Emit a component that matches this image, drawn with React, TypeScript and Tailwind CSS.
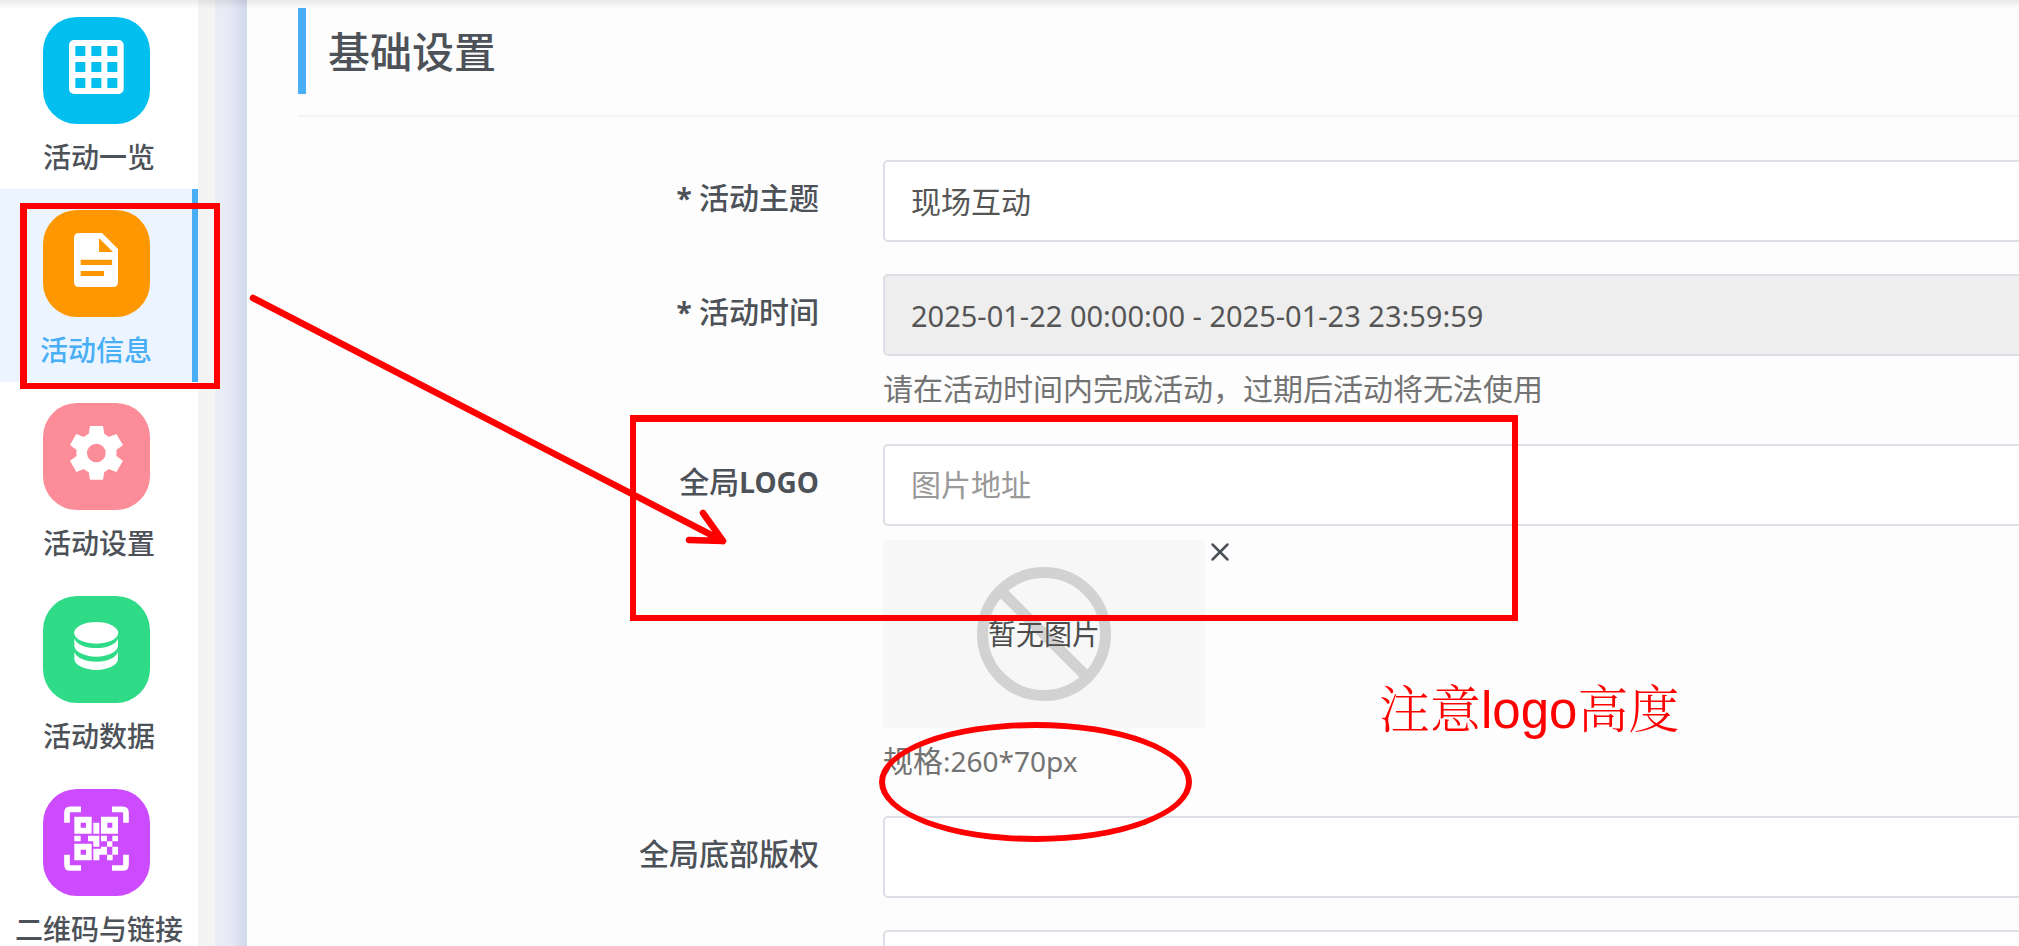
import type { ReactNode } from 'react';
import { clsx } from 'clsx';
import { X } from 'lucide-react';

const GridIcon = () => (
  <svg viewBox="129 51 321 321" className="size-full" aria-hidden="true">
    <rect x="207" y="120" width="164" height="162" rx="15" fill="#fff" />
    {[138, 186, 234].map((y) =>
      [226, 274, 322].map((x) => (
        <rect key={`${x}-${y}`} x={x} y={y} width="30" height="30" fill="#02bff0" />
      )),
    )}
  </svg>
);

const DocIcon = () => (
  <svg viewBox="129 630 321 321" className="size-full" aria-hidden="true">
    <path
      d="M238 699H306L354 747V845Q354 861 338 861H238Q222 861 222 845V715Q222 699 238 699Z"
      fill="#fff"
    />
    <path d="M297 714L339 756H297ZM242 779H336V795H242ZM242 813H312V828H242Z" fill="#ff9702" />
  </svg>
);

const GearIcon = () => (
  <svg viewBox="129 69 321 321" className="size-full" aria-hidden="true">
    <path
      fill="#fff"
      fillRule="evenodd"
      d="M270 138H309L313 162Q320 165 326 171L349 162L369 195L349 210Q351 219 349 228L369 242L349 276L326 267Q320 273 313 276L309 299H270L266 276Q258 273 252 267L229 276L210 242L230 228Q228 219 230 210L210 195L229 162L252 171Q258 165 266 162ZM289 191A28 28 0 1 0 289 247A28 28 0 1 0 289 191Z"
    />
  </svg>
);

const DatabaseIcon = () => (
  <svg viewBox="129 648 321 321" className="size-full" aria-hidden="true">
    <g fill="#fff">
      <ellipse cx="288.500" cy="758.500" rx="66" ry="32.500" />
      <path d="M223 776C230 793 256 804 289 804S347 793 354 776V798C352 816 324 830 289 830S225 816 223 798Z" />
      <path d="M223 816C230 834 256 845 289 845S347 834 354 816V838C352 856 324 870 289 870S225 856 223 838Z" />
    </g>
  </svg>
);

const QrIcon = () => (
  <svg viewBox="129 148 321 321" className="size-full" aria-hidden="true">
    <path
      fill="none"
      stroke="#fff"
      strokeWidth="17"
      d="M201 249V219Q201 209 211 209H243M336 209H368Q378 209 378 219V249M378 345V375Q378 385 368 385H336M243 385H211Q201 385 201 375V345"
    />
    <path
      fill="#fff"
      fillRule="evenodd"
      d="M223 231H275V282H223ZM242 249V264H258V249ZM303 231H354V282H303ZM322 249V264H337V249ZM223 312H275V362H223ZM242 330V345H258V330Z"
    />
    <path
      fill="#fff"
      d="M280 249H298V282H280ZM223 288H242V305H223ZM264 288H298V321H280V305H264ZM303 288H321V305H303ZM337 288H354V305H337ZM321 305H337V321H321ZM303 321H321V345H298V362H280V327H303ZM337 321H354V345H337ZM321 345H338V362H321Z"
    />
  </svg>
);

type NavItem = { label: string; color: string; icon: ReactNode; active?: boolean };

const navItems: NavItem[] = [
  { label: '活动一览', color: 'bg-[#02bff0]', icon: <GridIcon /> },
  { label: '活动信息', color: 'bg-[#ff9702]', icon: <DocIcon />, active: true },
  { label: '活动设置', color: 'bg-[#fd8c99]', icon: <GearIcon /> },
  { label: '活动数据', color: 'bg-[#30db88]', icon: <DatabaseIcon /> },
  { label: '二维码与链接', color: 'bg-[#cd4bff]', icon: <QrIcon /> },
];

const inputClass =
  'block h-[82px] w-full rounded-[5px] border-2 border-[#dce0e6] bg-white px-[26px] pb-[2px] text-[30px] text-[#555] placeholder:text-[#999] outline-none';

function Field({ id, label, children }: { id: string; label?: ReactNode; children: ReactNode }) {
  return (
    <div className="grid grid-cols-[585px_minmax(0,1fr)]">
      <div className="pt-4 pr-16 text-right text-[30px] leading-[44px] font-medium text-[#4d5259]">
        {label && <label htmlFor={id}>{label}</label>}
      </div>
      <div>{children}</div>
    </div>
  );
}

function Strong({ children }: { children: ReactNode }) {
  return <span className="text-[28px] font-bold">{children}</span>;
}

function Help({ children }: { children: ReactNode }) {
  return <p className="mt-[10px] text-[30px] leading-[46px] text-[#737373]">{children}</p>;
}

export default function App() {
  return (
    <div className="relative flex h-screen overflow-hidden bg-[#fdfdfd] font-['Noto_Sans','Noto_Sans_CJK_SC',sans-serif]">
      <nav className="-mt-1 w-[198px] shrink-0 bg-white">
        {navItems.map((item) => (
          <a
            key={item.label}
            href="#"
            className={clsx(
              'block h-[193px] pt-[21px] text-center text-[28px] leading-[32px] font-medium whitespace-nowrap',
              item.active
                ? 'border-r-[6px] border-[#48aff7] bg-[#ecf5ff] text-[#48aff7]'
                : 'text-[#4d5259]',
            )}
          >
            <span className={clsx('ml-[43px] block size-[107px] rounded-[34px]', item.color)}>
              {item.icon}
            </span>
            <span className="mt-[17px] block">{item.label}</span>
          </a>
        ))}
      </nav>
      <div className="w-[17px] shrink-0 bg-[#f4f4f4]" />
      <div className="w-8 shrink-0 bg-linear-to-r from-[#e9edf5] via-[#e8ebf6] via-40% to-[#d0d8ec]" />

      <main className="min-w-0 flex-1 pt-2 pl-[51px]">
        <h2 className="flex h-[86px] items-center border-l-8 border-[#48aff7] pt-[2px] pl-[22px] text-[42px] leading-[60px] font-medium text-[#4d5259]">
          基础设置
        </h2>
        <hr className="mt-[21px] border-t-2 border-[#f3f3f3]" />
        <form className="-mr-4 mt-[43px] flex flex-col gap-8">
          <Field
            id="topic"
            label={
              <>
                <Strong>* </Strong>活动主题
              </>
            }
          >
            <input id="topic" type="text" defaultValue="现场互动" className={inputClass} />
          </Field>
          <Field
            id="period"
            label={
              <>
                <Strong>* </Strong>活动时间
              </>
            }
          >
            <input
              id="period"
              type="text"
              readOnly
              defaultValue="2025-01-22 00:00:00 - 2025-01-23 23:59:59"
              className="block h-[82px] w-full rounded-[5px] border-2 border-[#dce0e6] bg-[#eee] px-[26px] text-[29px] text-[#555] outline-none"
            />
            <Help>请在活动时间内完成活动，过期后活动将无法使用</Help>
          </Field>
          <Field
            id="logo"
            label={
              <>
                全局<Strong>LOGO</Strong>
              </>
            }
          >
            <input id="logo" type="text" placeholder="图片地址" className={inputClass} />
            <div className="mt-[14px] flex items-start">
              <div className="grid h-[188px] w-[322px] place-items-center bg-[#f7f7f7]">
                <svg
                  viewBox="0 0 134 134"
                  className="col-start-1 row-start-1 size-[134px]"
                  fill="none"
                  stroke="#d2d2d2"
                  aria-hidden="true"
                >
                  <circle cx="67" cy="67" r="61.500" strokeWidth="11" />
                  <path d="M24 24L110 110" strokeWidth="11" />
                </svg>
                <span className="col-start-1 row-start-1 text-[28px] leading-[40px] text-[#4c4c4c]">
                  暂无图片
                </span>
              </div>
              <button type="button" aria-label="删除图片" className="h-6 text-[#4d5259]">
                <X size={30} strokeWidth={2} className="-mt-[3px]" />
              </button>
            </div>
            <Help>
              规格<span className="text-[28px]">:260*70px</span>
            </Help>
          </Field>
          <Field id="copyright" label="全局底部版权">
            <input id="copyright" type="text" className={inputClass} />
          </Field>
          <Field id="extra">
            <input id="extra" type="text" aria-label="附加信息" className={inputClass} />
          </Field>
        </form>
      </main>

      <div className="pointer-events-none absolute inset-x-0 top-0 h-[9px] bg-linear-to-b from-black/8 to-transparent" />

      <div className="pointer-events-none absolute top-[203px] left-5 h-[186px] w-[200px] border-6 border-l-7 border-[#f00]" />
      <div className="pointer-events-none absolute top-[415px] left-[630px] h-[206px] w-[888px] border-6 border-t-7 border-[#f00]" />
      <div className="pointer-events-none absolute top-[722px] left-[879px] h-[120px] w-[313px] rounded-[50%] border-6 border-[#f00]" />
      <svg
        viewBox="240 280 500 280"
        className="pointer-events-none absolute top-[280px] left-[240px] h-[280px] w-[500px]"
        fill="none"
        stroke="#f00"
        strokeWidth="6.500"
        strokeLinecap="round"
        strokeLinejoin="round"
        aria-hidden="true"
      >
        <path d="M253 298L723 541M703 513L723 541L689 540" />
      </svg>
      <p className="pointer-events-none absolute top-[681px] left-[1379px] text-[51px] leading-[60px] font-light whitespace-nowrap text-[#f00] font-['Liberation_Sans','Noto_Serif_CJK_SC','Noto_Sans_CJK_SC',serif]">
        注意logo高度
      </p>
    </div>
  );
}
